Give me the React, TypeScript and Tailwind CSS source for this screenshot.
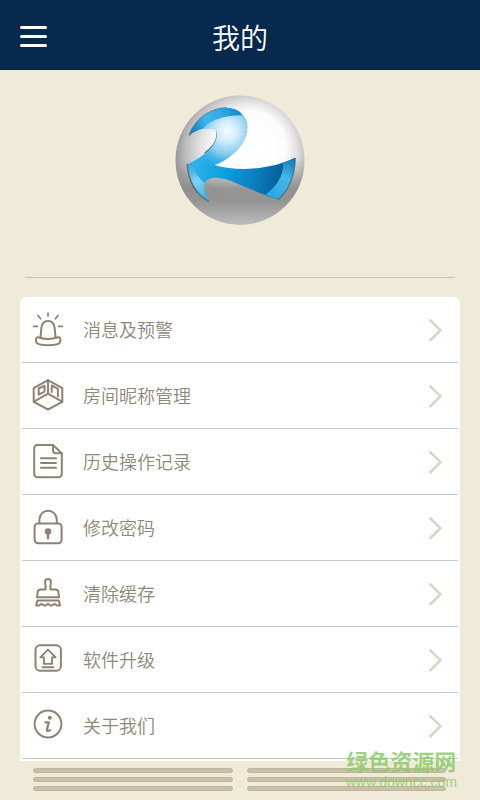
import type { ReactNode } from "react";

const iconProps = {
  width: 32,
  height: 36,
  viewBox: "0 0 32 36",
  fill: "none",
  stroke: "currentColor",
  strokeWidth: 2,
  strokeLinecap: "round" as const,
  strokeLinejoin: "round" as const,
  "aria-hidden": true,
};

function Icon({ children }: { children: ReactNode }) {
  return (
    <svg {...iconProps} className="shrink-0 text-[#8f8273]">
      {children}
    </svg>
  );
}

const menuItems = [
  {
    id: "alerts",
    label: "消息及预警",
    icon: (
      <Icon>
        <path d="M16 1v3M6 3.500l2.600 3.300M26 3.500l-2.600 3.300M1.500 14.300h4M26.500 14.300h4" strokeWidth="1.700" />
        <path d="M8.400 26l1-10.500C9.800 11.300 12.400 8.900 16 8.900s6.200 2.400 6.600 6.600l1 10.500" />
        <path d="M7.300 25.500c-2-.8-3.300-.2-3.300 1.700v1.800c0 2.900 5 4.200 12.200 4.200s12.200-1.300 12.200-4.200v-1.800c0-1.900-1.300-2.500-3.300-1.700-4.500 1.900-13.300 1.900-17.800 0z" />
      </Icon>
    ),
  },
  {
    id: "rooms",
    label: "房间昵称管理",
    icon: (
      <Icon>
        <path d="M16 2.200l14.300 7.900v13.800L16 31.500 1.700 23.900V10.100z" />
        <path d="M16 2.200v13.500M1.900 23.700L16 15.700l14.100 8" />
        <path d="M6.700 10.500l5.800-2.900v6l-5.800 3zM19.700 14V7.500l6.200 3.300v7.500" />
      </Icon>
    ),
  },
  {
    id: "history",
    label: "历史操作记录",
    icon: (
      <Icon>
        <path d="M21 1H5.600a3.400 3.400 0 0 0-3.400 3.400v25.500a3.400 3.400 0 0 0 3.400 3.400h20.800a3.400 3.400 0 0 0 3.400-3.400V9.200z" />
        <path d="M21 1v5.200a3 3 0 0 0 3 3h5.800M9 14.200h15M9 19.100h15M9 23.800h15" />
      </Icon>
    ),
  },
  {
    id: "password",
    label: "修改密码",
    icon: (
      <Icon>
        <rect x="2.600" y="13.400" width="27" height="19.800" rx="3.400" />
        <path d="M7.400 13.200V9.500a8.700 8.700 0 0 1 17.400 0v3.700" />
        <circle cx="16" cy="21.600" r="2.300" fill="currentColor" />
        <path d="M16 23v5.300" strokeWidth="2.400" />
      </Icon>
    ),
  },
  {
    id: "cache",
    label: "清除缓存",
    icon: (
      <Icon>
        <path d="M13.500 13.500c.6-2.500-.4-5.300-.4-7.600a2.900 2.900 0 0 1 5.800 0c0 2.300-1 5.100-.4 7.600h4.900a3 3 0 0 1 3 2.600l.7 5.200H5l.7-5.200a3 3 0 0 1 3-2.600z" />
        <path d="M5.400 24.500h21.400l1.200 5h-3l-2.500-1.700-2.500 1.700h-1.500L16 27.800l-2.500 1.700H12l-2.500-1.700L7 29.500H4.200z" />
      </Icon>
    ),
  },
  {
    id: "upgrade",
    label: "软件升级",
    icon: (
      <Icon>
        <rect x="3.500" y="3.300" width="25.400" height="25.400" rx="4.500" />
        <path d="M16 7.600l-7.600 7.800h3.500v6.500h8.200v-6.500h3.500zM10.600 25.200h10.800" strokeWidth="1.900" />
      </Icon>
    ),
  },
  {
    id: "about",
    label: "关于我们",
    icon: (
      <Icon>
        <circle cx="16" cy="16" r="13.400" />
        <circle cx="17.800" cy="9.800" r="2" fill="currentColor" stroke="none" />
        <path d="M13.400 14.300h3.500l-2 7.300c-.4 1.500 1.600 1.700 3.200.6" strokeWidth="2.200" />
      </Icon>
    ),
  },
];

function Logo() {
  return (
    <svg className="h-[130px] w-[130px]" viewBox="29 33 390 390" role="img" aria-label="logo">
      <defs>
        <radialGradient id="ball" gradientUnits="userSpaceOnUse" cx="236" cy="212" r="212" fx="275" fy="165">
          <stop offset="0" stopColor="#ffffff" />
          <stop offset=".5" stopColor="#fcfcfc" />
          <stop offset=".68" stopColor="#e2e2e2" />
          <stop offset=".86" stopColor="#bcbcbc" />
          <stop offset="1" stopColor="#929292" />
        </radialGradient>
        <linearGradient id="shade" gradientUnits="userSpaceOnUse" x1="0" y1="225" x2="0" y2="422">
          <stop offset="0" stopColor="#9a9a9a" stopOpacity="0" />
          <stop offset=".45" stopColor="#8c8c8c" stopOpacity=".9" />
          <stop offset=".65" stopColor="#959595" />
          <stop offset="1" stopColor="#bcbcbc" />
        </linearGradient>
        <linearGradient id="wave" gradientUnits="userSpaceOnUse" x1="90" y1="230" x2="350" y2="290">
          <stop offset="0" stopColor="#2fb2ea" />
          <stop offset=".35" stopColor="#0c9fe0" />
          <stop offset=".7" stopColor="#0a7fc0" />
          <stop offset="1" stopColor="#065c98" />
        </linearGradient>
        <radialGradient id="shine" gradientUnits="userSpaceOnUse" cx="186" cy="142" r="118">
          <stop offset="0" stopColor="#f4fbff" />
          <stop offset=".25" stopColor="#d3edfa" />
          <stop offset=".6" stopColor="#7fcbee" />
          <stop offset="1" stopColor="#2fb2ea" stopOpacity="0" />
        </radialGradient>
        <linearGradient id="crest" gradientUnits="userSpaceOnUse" x1="75" y1="150" x2="230" y2="80">
          <stop offset="0" stopColor="#0a78b8" />
          <stop offset=".35" stopColor="#3fb5ea" />
          <stop offset=".6" stopColor="#37ace4" />
          <stop offset="1" stopColor="#0b86c6" />
        </linearGradient>
        <linearGradient id="blade" gradientUnits="userSpaceOnUse" x1="70" y1="235" x2="125" y2="345">
          <stop offset="0" stopColor="#279fd6" />
          <stop offset=".5" stopColor="#82d3f5" />
          <stop offset="1" stopColor="#36addf" />
        </linearGradient>
        <linearGradient id="tail" gradientUnits="userSpaceOnUse" x1="385" y1="225" x2="315" y2="340">
          <stop offset="0" stopColor="#0e78b8" />
          <stop offset=".45" stopColor="#45b7ea" />
          <stop offset="1" stopColor="#2ba6df" />
        </linearGradient>
        <clipPath id="round">
          <circle cx="224" cy="228" r="194" />
        </clipPath>
      </defs>
      <g clipPath="url(#round)">
        <circle cx="224" cy="228" r="194" fill="url(#ball)" />
        <path d="M20 225H85L147 243C220 265 320 255 388 222L425 225V430H20z" fill="url(#shade)" />
        {/* dark rims behind the ribbon */}
        <path
          d="M72 154C92 101 140 72 185 72M155 140C160 165 145 188 118 208M66 240C68 290 92 332 130 352M389 222C389 270 371 320 336 348"
          fill="none"
          stroke="#5c6f7b"
          strokeWidth="5"
        />
        <path
          d="M73 152C95 100 140 72 185 72C210 73 226 82 232 94C250 112 250 140 235 170C220 200 180 232 147 243C220 265 320 255 388 222C388 270 370 320 337 346C300 335 270 320 230 305C190 285 165 280 145 281C130 283 120 290 115 300C116 320 122 335 131 350C95 330 72 290 68 242L85 231C120 212 155 185 155 150C155 138 145 133 135 133C110 132 90 140 73 152z"
          fill="url(#wave)"
        />
        <path
          d="M110 134C140 105 180 90 230 94C250 112 250 140 235 170C220 200 180 232 147 243L110 260L85 231C120 212 155 185 155 150C155 138 145 133 135 133z"
          fill="url(#shine)"
        />
        <path
          d="M73 152C95 100 140 72 185 72C210 73 224 82 230 94C185 93 140 105 112 134C97 137 85 144 73 152z"
          fill="url(#crest)"
        />
        <path d="M78 236C90 268 104 286 117 297C114 318 122 335 131 350C95 330 72 290 68 242z" fill="url(#blade)" />
        <path d="M388 222C388 270 370 320 337 346L300 332C335 308 354 275 354 237z" fill="url(#tail)" />
      </g>
    </svg>
  );
}

function Stripes() {
  return (
    <div className="flex flex-1 flex-col gap-1">
      {[0, 1, 2].map((n) => (
        <div key={n} className="h-[5px] rounded-full border border-[#bfb59e] bg-[#cbc0a6]" />
      ))}
    </div>
  );
}

export default function App() {
  return (
    <div className="relative min-h-screen bg-[#f0ead8] font-['Noto_Sans_CJK_SC',sans-serif]">
      <header className="grid h-[70px] grid-cols-[1fr_auto_1fr] items-center border-b border-[#0b2238] bg-[#07294e] px-5 pt-1">
        <button type="button" aria-label="菜单" className="flex w-[27px] flex-col gap-[6px]">
          <span className="h-[3px] rounded-full bg-white" />
          <span className="h-[3px] rounded-full bg-white" />
          <span className="h-[3px] rounded-full bg-white" />
        </button>
        <h1 className="text-[28px] leading-10 font-[350] text-white">我的</h1>
      </header>

      <main>
        <section className="mx-[25px] flex h-[208px] justify-center border-b border-[#cbc2b0] pt-[25px]">
          <Logo />
        </section>

        <nav className="mx-5 mt-[19px] rounded-t-md bg-white px-[2px] pb-[2px]">
          {menuItems.map((item) => (
            <button
              key={item.id}
              type="button"
              className="flex h-[66px] w-full items-center border-b border-[#cbc8be] pr-4 pl-[10px] text-left"
            >
              {item.icon}
              <span className="ml-[19px] flex-1 pb-[2px] text-lg font-[350] text-[#8f8879]">{item.label}</span>
              <svg
                width="14"
                height="24"
                viewBox="0 0 14 24"
                fill="none"
                stroke="#ddd3c6"
                strokeWidth="2.500"
                className="shrink-0"
                aria-hidden
              >
                <path d="M1.500 1.500L12.500 12.200 1.500 23" />
              </svg>
            </button>
          ))}
        </nav>

        <div className="flex gap-[14px] pt-[7px] pr-[34px] pl-[33px]">
          <Stripes />
          <Stripes />
        </div>
      </main>

      <div className="absolute right-[23px] bottom-[10px] text-center text-[#8ccc69]/85">
        <p className="text-[22px] leading-7 font-bold">绿色资源网</p>
        <p className="font-['Liberation_Sans',sans-serif] text-sm leading-4">www.downcc.com</p>
      </div>
    </div>
  );
}
